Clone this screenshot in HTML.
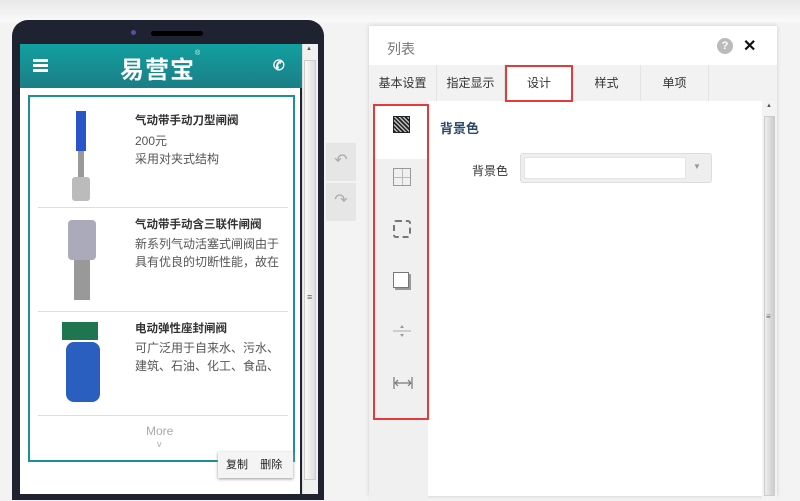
<!DOCTYPE html>
<html><head><meta charset="utf-8"><style>
*{margin:0;padding:0;box-sizing:border-box}
body{width:800px;height:487px;overflow:hidden;background:#f3f3f3;font-family:"Liberation Sans","Noto Sans CJK SC",sans-serif;position:relative}
.a{position:absolute}
.phone{left:12px;top:20px;width:312px;height:480px;background:#1f2231;border-radius:16px 16px 0 0}
.screen{left:20px;top:44px;width:280px;height:450px;background:#fff}
.hdr{left:20px;top:44px;width:282px;height:44px;background:linear-gradient(#12a0a0,#1b7e86)}
.card{left:28px;top:95px;width:267px;height:367px;border:2px solid #1c8f98}
.item{position:absolute;left:8px;width:250px;border-bottom:1px solid #ddd}
.t{font-size:11.5px;font-weight:bold;color:#333;position:absolute;left:97px}
.d{font-size:12px;color:#555;position:absolute;left:97px;line-height:18px}
.tab{position:absolute;top:0;height:36px;line-height:36px;font-size:12px;color:#333;text-align:center;border-right:1px solid #e4e4e4}
.ic{position:absolute;left:18px}
</style></head><body>
<div class="a" style="left:0;top:0;width:800px;height:22px;background:linear-gradient(#e8e8e8,#fafafa)"></div>
<div class="a phone"></div>
<div class="a" style="left:131px;top:30px;width:5px;height:5px;border-radius:50%;background:#5a4f9a"></div>
<div class="a" style="left:151px;top:31px;width:52px;height:5px;border-radius:3px;background:#000"></div>
<div class="a screen"></div>
<div class="a hdr"></div>
<div class="a" style="left:33px;top:59px;width:15px;height:3px;background:#fff;box-shadow:0 5px #fff,0 10px #fff"></div>
<div class="a" style="left:120px;top:50px;color:#fff;font-size:24px;font-weight:bold;letter-spacing:1px">易营宝</div>
<div class="a" style="left:195px;top:50px;color:#cfe;font-size:7px">®</div>
<div class="a" style="left:273px;top:57px;color:#fff;font-size:14px;font-weight:bold">✆</div>
<div class="a" style="left:302px;top:44px;width:16px;height:450px;background:#f0f0f0;border-left:1px solid #ddd"></div>
<div class="a" style="left:304px;top:60px;width:12px;height:420px;background:linear-gradient(90deg,#fafafa,#ddd);border:1px solid #ccc"></div>
<div class="a" style="left:306px;top:46px;font-size:6px;color:#555">▲</div>
<div class="a" style="left:307px;top:292px;font-size:9px;color:#666">≡</div>
<div class="a card">
 <div class="item" style="top:0;height:111px">
  <div class="a" style="left:38px;top:14px;width:10px;height:40px;background:#2a55c8"></div>
  <div class="a" style="left:40px;top:54px;width:6px;height:30px;background:#999"></div>
  <div class="a" style="left:34px;top:80px;width:18px;height:24px;background:#bbb;border-radius:3px"></div>
  <div class="t" style="top:15px">气动带手动刀型闸阀</div>
  <div class="d" style="top:35px">200元<br>采用对夹式结构</div>
 </div>
 <div class="item" style="top:111px;height:104px">
  <div class="a" style="left:30px;top:12px;width:28px;height:40px;background:#aab;border-radius:4px"></div>
  <div class="a" style="left:36px;top:52px;width:16px;height:40px;background:#999"></div>
  <div class="t" style="top:8px">气动带手动含三联件闸阀</div>
  <div class="d" style="top:27px">新系列气动活塞式闸阀由于<br>具有优良的切断性能，故在</div>
 </div>
 <div class="item" style="top:215px;height:104px">
  <div class="a" style="left:24px;top:10px;width:36px;height:18px;background:#1f7550"></div>
  <div class="a" style="left:28px;top:30px;width:34px;height:60px;background:#2a5fbf;border-radius:8px"></div>
  <div class="t" style="top:8px">电动弹性座封闸阀</div>
  <div class="d" style="top:27px">可广泛用于自来水、污水、<br>建筑、石油、化工、食品、</div>
 </div>
 <div class="a" style="left:116px;top:327px;font-size:12px;color:#aaa">More</div>
 <div class="a" style="left:127px;top:342px;font-size:9px;color:#aaa">v</div>
</div>
<div class="a" style="left:218px;top:452px;width:75px;height:26px;background:#f4f4f4;box-shadow:0 1px 3px #999;font-size:11px;color:#222;line-height:26px;padding-left:8px">复制&nbsp;&nbsp;&nbsp;&nbsp;删除</div>
<div class="a" style="left:326px;top:143px;width:30px;height:38px;background:#e6e6e6;color:#aaa;font-size:16px;text-align:center;line-height:36px">↶</div>
<div class="a" style="left:326px;top:183px;width:30px;height:38px;background:#e6e6e6;color:#aaa;font-size:16px;text-align:center;line-height:36px">↷</div>
<div class="a" style="left:369px;top:26px;width:408px;height:470px;background:#fff;box-shadow:0 0 4px #ccc">
 <div class="a" style="left:18px;top:13px;font-size:14px;color:#777">列表</div>
 <div class="a" style="left:348px;top:12px;width:16px;height:16px;border-radius:50%;background:#bbb;color:#fff;font-size:11px;font-weight:bold;text-align:center;line-height:16px">?</div>
 <div class="a" style="left:374px;top:10px;font-size:16px;font-weight:bold;color:#111">✕</div>
 <div class="a" style="left:0;top:39px;width:408px;height:36px;background:#f2f2f2">
  <div class="tab" style="left:0;width:68px">基本设置</div>
  <div class="tab" style="left:68px;width:68px">指定显示</div>
  <div class="tab" style="left:136px;width:68px;background:#fff;border:2px solid #e53a3a;height:37px;line-height:33px">设计</div>
  <div class="tab" style="left:204px;width:68px">样式</div>
  <div class="tab" style="left:272px;width:68px">单项</div>
 </div>
 <div class="a" style="left:0;top:75px;width:59px;height:400px;background:#f0f0f0"></div>
 <div class="a" style="left:4px;top:78px;width:55px;height:55px;background:#fff"></div>
 <div class="a" style="left:4px;top:78px;width:56px;height:316px;border:2px solid #e53a3a">
  <div class="ic" style="top:10px;width:17px;height:17px;background:repeating-linear-gradient(45deg,#222 0 1.5px,#bbb 1.5px 3px);border:1px solid #222"></div>
  <div class="ic" style="top:62px;width:18px;height:18px;border:1px solid #999;background:linear-gradient(90deg,transparent 8px,#bbb 8px 9px,transparent 9px),linear-gradient(transparent 8px,#bbb 8px 9px,transparent 9px)"></div>
  <div class="ic" style="top:114px;width:18px;height:18px;border:2px dashed #777;border-radius:3px"></div>
  <div class="ic" style="top:166px;width:16px;height:16px;border:1px solid #777;background:#fff;box-shadow:2px 2px 0 #999"></div>
  <svg class="ic" style="top:218px" width="18" height="14" viewBox="0 0 18 14"><line x1="0" y1="7" x2="18" y2="7" stroke="#aaa"/><path d="M7 4 L9 1 L11 4 Z M7 10 L9 13 L11 10 Z" fill="#999"/></svg>
  <svg class="ic" style="top:270px" width="20" height="14" viewBox="0 0 20 14"><path d="M1 1V13M19 1V13M2 7H18M2 7L5 4M2 7L5 10M18 7L15 4M18 7L15 10" stroke="#777" fill="none" stroke-width="1.2"/></svg>
 </div>
 <div class="a" style="left:71px;top:92px;font-size:13px;font-weight:bold;color:#2b4a6a">背景色</div>
 <div class="a" style="left:103px;top:136px;font-size:12px;color:#333">背景色</div>
 <div class="a" style="left:151px;top:127px;width:192px;height:30px;border-radius:3px;background:#eee;border:1px solid #ddd"></div>
 <div class="a" style="left:155px;top:131px;width:162px;height:22px;background:#fff;border:1px solid #e4e4e4"></div>
 <div class="a" style="left:324px;top:136px;font-size:8px;color:#999">▼</div>
 <div class="a" style="left:393px;top:75px;width:15px;height:400px;background:#f3f3f3"></div>
 <div class="a" style="left:395px;top:90px;width:11px;height:380px;background:linear-gradient(90deg,#eee,#ccc);border:1px solid #ccc"></div>
 <div class="a" style="left:397px;top:77px;font-size:6px;color:#555">▲</div>
 <div class="a" style="left:397px;top:286px;font-size:8px;color:#666">≡</div>
</div>
</body></html>
